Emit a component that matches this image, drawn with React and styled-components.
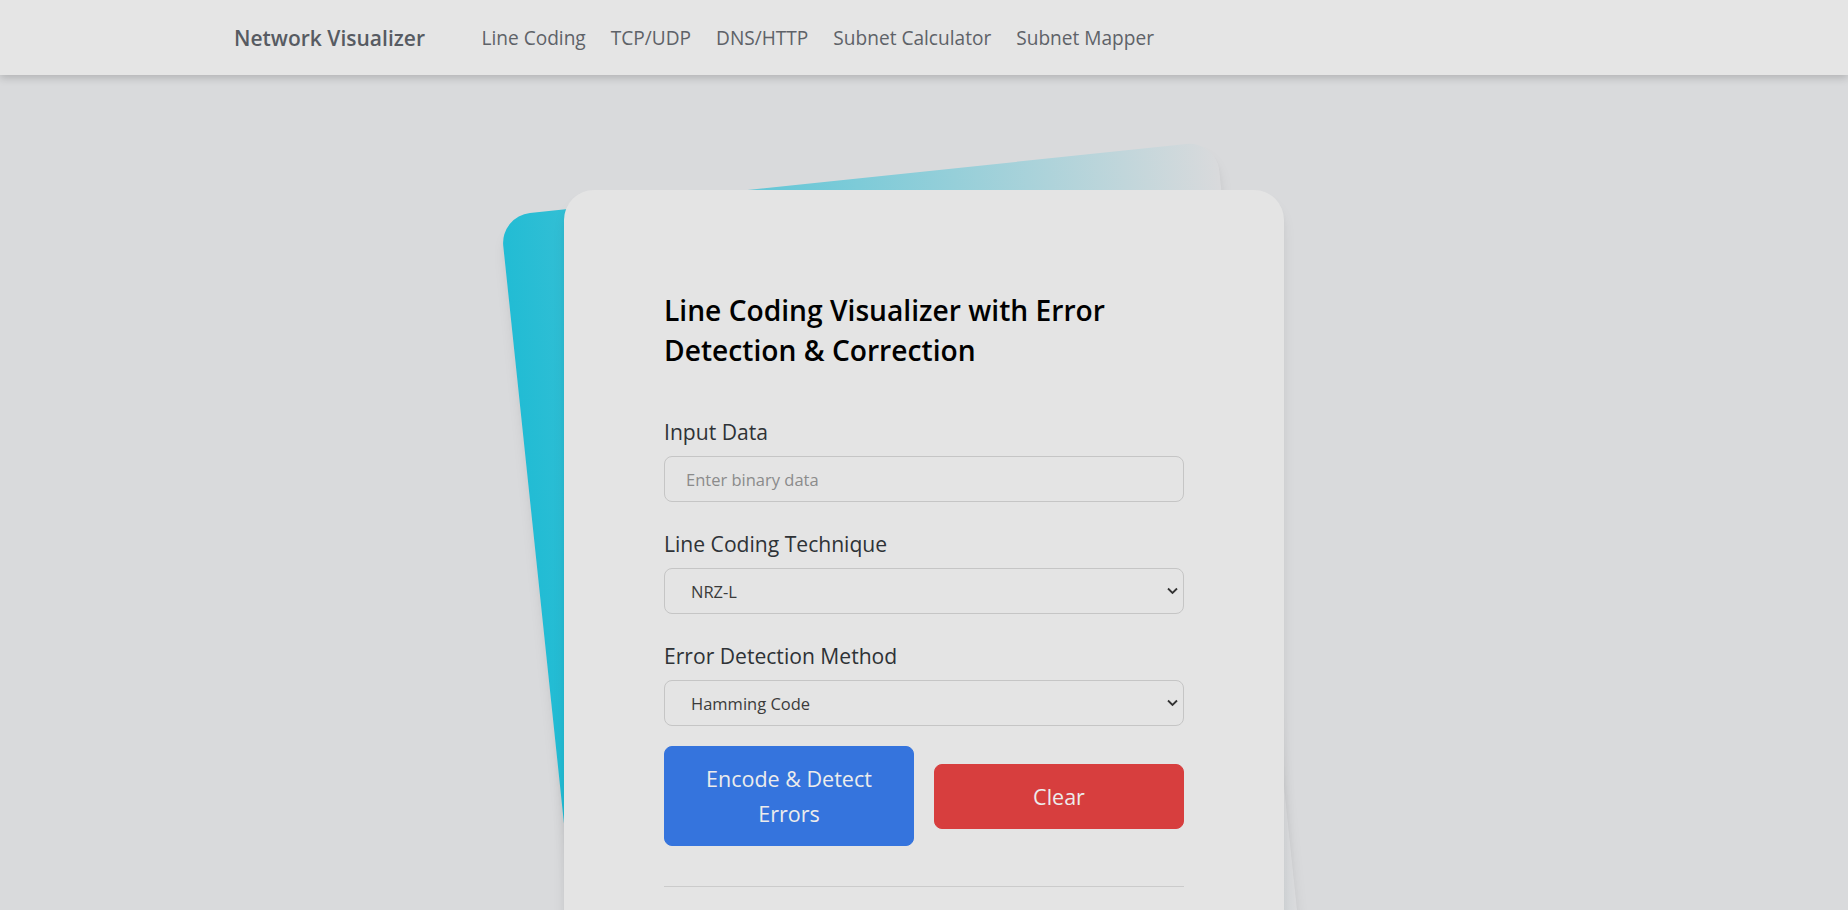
import styled, { createGlobalStyle } from "styled-components";
import { useState } from "react";

const GlobalStyle = createGlobalStyle`
  * { box-sizing: border-box; }
  body {
    margin: 0;
    background: #d9dadc;
    font-family: "Open Sans", "Noto Sans", sans-serif;
  }
`;

const Navbar = styled.nav`
  position: relative;
  z-index: 2;
  height: 75px;
  display: flex;
  align-items: center;
  padding-left: 234px;
  background: #e5e5e5;
  box-shadow: 0 3px 8px rgba(0, 0, 0, 0.18);
`;

const Brand = styled.a`
  font-size: 21px;
  font-weight: 600;
  color: #575b62;
  text-decoration: none;
  margin-right: 44px;
`;

const NavLink = styled.a`
  font-size: 19.1px;
  color: #5e6268;
  text-decoration: none;
  padding: 0 12.5px;
`;

const Main = styled.main`
  display: flex;
  justify-content: center;
  padding-top: 100px;
`;

const Stack = styled.div`
  position: relative;
  width: 720px;
  padding: 15px 0;

  &::before {
    content: "";
    position: absolute;
    inset: 0;
    border-radius: 30px;
    background: linear-gradient(to right, #22bcd4, rgba(34, 188, 212, 0));
    box-shadow: 0 10px 15px -3px rgba(0, 0, 0, 0.1), 0 4px 6px -2px rgba(0, 0, 0, 0.05);
    transform: rotate(-6deg);
  }
`;

const Card = styled.div`
  position: relative;
  min-height: 1230px;
  padding: 100px;
  border-radius: 30px;
  background: #e4e4e4;
  box-shadow: 0 10px 15px -3px rgba(0, 0, 0, 0.1), 0 4px 6px -2px rgba(0, 0, 0, 0.05);
`;

const Title = styled.h2`
  margin: 0 0 46px;
  font-size: 28.2px;
  line-height: 40px;
  font-weight: 600;
  color: #000;
`;

const Fields = styled.div`
  display: flex;
  flex-direction: column;
  gap: 26px;
`;

const Label = styled.label`
  display: block;
  margin-bottom: 8px;
  font-size: 21.1px;
  line-height: 32px;
  color: #2e3236;
`;

const Input = styled.input`
  display: block;
  width: 100%;
  height: 46px;
  padding: 0 21px;
  border: 1px solid #c5c5c5;
  border-radius: 8px;
  background: transparent;
  font-family: inherit;
  font-size: 16.5px;
  color: #3b3b3b;
  outline: none;

  &::placeholder {
    color: #8b8b8b;
  }
`;

const SelectWrap = styled.div`
  position: relative;
`;

const Select = styled.select`
  display: block;
  width: 100%;
  height: 46px;
  padding: 0 40px 0 26px;
  appearance: none;
  border: 1px solid #c5c5c5;
  border-radius: 8px;
  background: transparent;
  font-family: inherit;
  font-size: 16.5px;
  color: #3b3b3b;
  outline: none;
`;

const Chevron = styled.svg`
  position: absolute;
  right: 6px;
  top: 50%;
  transform: translateY(-50%);
  pointer-events: none;
`;

const ButtonRow = styled.div`
  display: grid;
  grid-template-columns: 1fr 1fr;
  gap: 20px;
  align-items: center;
  margin-top: 20px;
`;

const Button = styled.button`
  padding: 14px 20px;
  border: 1px solid ${(p) => p.$bg};
  border-radius: 8px;
  background: ${(p) => p.$bg};
  color: #ececec;
  font-family: inherit;
  font-size: 21.5px;
  line-height: 35px;
  text-align: center;
  cursor: pointer;
`;

const Divider = styled.hr`
  margin: 40px 0 0;
  border: 0;
  border-top: 1px solid #cbcbcb;
`;

function SelectField({ id, label, value, onChange, options }) {
  return (
    <div>
      <Label htmlFor={id}>{label}</Label>
      <SelectWrap>
        <Select id={id} value={value} onChange={(e) => onChange(e.target.value)}>
          {options.map((o) => (
            <option key={o}>{o}</option>
          ))}
        </Select>
        <Chevron width="11" height="7" viewBox="0 0 11 7">
          <path d="M1 1l4.5 4.5L10 1" fill="none" stroke="#343434" strokeWidth="1.8" />
        </Chevron>
      </SelectWrap>
    </div>
  );
}

export default function App() {
  const [data, setData] = useState("");
  const [technique, setTechnique] = useState("NRZ-L");
  const [method, setMethod] = useState("Hamming Code");

  return (
    <>
      <GlobalStyle />
      <Navbar>
        <Brand href="#">Network Visualizer</Brand>
        <NavLink href="#">Line Coding</NavLink>
        <NavLink href="#">TCP/UDP</NavLink>
        <NavLink href="#">DNS/HTTP</NavLink>
        <NavLink href="#">Subnet Calculator</NavLink>
        <NavLink href="#">Subnet Mapper</NavLink>
      </Navbar>
      <Main>
        <Stack>
          <Card>
            <Title>Line Coding Visualizer with Error Detection &amp; Correction</Title>
            <Fields>
              <div>
                <Label htmlFor="data">Input Data</Label>
                <Input
                  id="data"
                  placeholder="Enter binary data"
                  value={data}
                  onChange={(e) => setData(e.target.value)}
                />
              </div>
              <SelectField
                id="technique"
                label="Line Coding Technique"
                value={technique}
                onChange={setTechnique}
                options={["NRZ-L", "NRZ-I", "Manchester", "Differential Manchester", "AMI"]}
              />
              <SelectField
                id="method"
                label="Error Detection Method"
                value={method}
                onChange={setMethod}
                options={["Hamming Code", "Parity Bit", "CRC", "Checksum"]}
              />
            </Fields>
            <ButtonRow>
              <Button $bg="#3574dd">Encode &amp; Detect Errors</Button>
              <Button $bg="#d73e3e" onClick={() => setData("")}>
                Clear
              </Button>
            </ButtonRow>
            <Divider />
          </Card>
        </Stack>
      </Main>
    </>
  );
}
